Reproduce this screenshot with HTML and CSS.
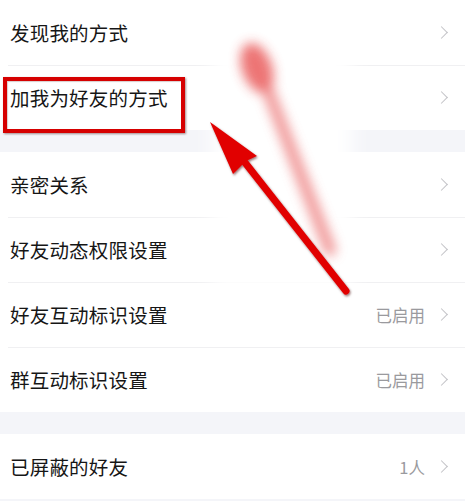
FILE: index.html
```html
<!DOCTYPE html>
<html lang="zh-CN">
<head>
  <meta charset="UTF-8" />
  <meta name="viewport" content="width=device-width, initial-scale=1" />
  <title>隐私设置</title>
  <link rel="stylesheet" href="styles.css">
</head>
<body>
  <div class="page">
    <section class="group">
      <div class="row">
        <span class="label">发现我的方式</span>
        <span class="chev"></span>
      </div>
      <div class="row">
        <span class="label">加我为好友的方式</span>
        <span class="chev"></span>
      </div>
    </section>
    <section class="group">
      <div class="row">
        <span class="label">亲密关系</span>
        <span class="chev"></span>
      </div>
      <div class="row">
        <span class="label">好友动态权限设置</span>
        <span class="chev"></span>
      </div>
      <div class="row">
        <span class="label">好友互动标识设置</span>
        <span class="meta">已启用</span>
        <span class="chev"></span>
      </div>
      <div class="row">
        <span class="label">群互动标识设置</span>
        <span class="meta">已启用</span>
        <span class="chev"></span>
      </div>
    </section>
    <section class="group">
      <div class="row">
        <span class="label">已屏蔽的好友</span>
        <span class="meta">1人</span>
        <span class="chev"></span>
      </div>
    </section>

    <!-- annotation drawn over the screenshot -->
    <div class="mark-box"></div>
    <svg class="marks" width="465" height="501" viewBox="0 0 465 501">
      <defs>
        <filter id="soft" x="-50%" y="-50%" width="200%" height="200%">
          <feGaussianBlur stdDeviation="9" />
        </filter>
        <filter id="smear" x="-50%" y="-50%" width="200%" height="200%">
          <feGaussianBlur stdDeviation="6" />
        </filter>
        <filter id="drop" x="-20%" y="-20%" width="140%" height="140%">
          <feDropShadow dx="1" dy="1.5" stdDeviation="1.2" flood-color="#400" flood-opacity="0.55" />
        </filter>
      </defs>
      <rect x="212" y="40" width="140" height="250" fill="#fff" filter="url(#soft)" />
      <g filter="url(#smear)" opacity="0.7">
        <line x1="262" y1="75" x2="330" y2="250" stroke="#ea6a6a" stroke-width="12" stroke-linecap="round" />
        <ellipse cx="257" cy="68" rx="15" ry="26" fill="#e53a3a" transform="rotate(-20 257 68)" />
      </g>
      <g filter="url(#drop)">
        <line x1="243" y1="160" x2="346" y2="291" stroke="#e10000" stroke-width="7" stroke-linecap="round" />
        <polygon points="210,122 257,156 246,161 233,174" fill="#e10000" />
      </g>
    </svg>
  </div>
</body>
</html>
```

FILE: styles.css
```css
body {
  margin: 0;
  background: #fff;
  font-family: "Noto Sans CJK SC", "Noto Sans", sans-serif;
  color: #161616;
}
.page {
  position: relative;
  width: 465px;
  height: 501px;
  overflow: hidden;
  background: #f4f5f9;
  display: flex;
  flex-direction: column;
  gap: 22px;
}
.group {
  background: #fff;
}
.row {
  height: 65px;
  display: flex;
  align-items: center;
  padding: 0 16px 0 10px;
  position: relative;
}
.row + .row::before {
  content: "";
  position: absolute;
  top: 0;
  left: 8px;
  right: 0;
  height: 1px;
  background: #f0f0f2;
}
.label {
  flex: 1;
  font-size: 19.5px;
  letter-spacing: 0.2px;
}
.meta {
  font-size: 16.5px;
  color: #9a9a9e;
  margin-right: 12px;
}
.chev {
  width: 8px;
  height: 8px;
  border-top: 1.6px solid #c2c2c6;
  border-right: 1.6px solid #c2c2c6;
  transform: rotate(45deg);
  margin-right: 3px;
}
.mark-box {
  position: absolute;
  left: 3px;
  top: 77px;
  width: 174px;
  height: 48px;
  border: 4px solid #d60000;
  box-shadow: 1px 1px 2px rgba(60, 0, 0, 0.45), inset 1px 1px 1px rgba(60, 0, 0, 0.2);
}
.marks {
  position: absolute;
  left: 0;
  top: 0;
}
```
